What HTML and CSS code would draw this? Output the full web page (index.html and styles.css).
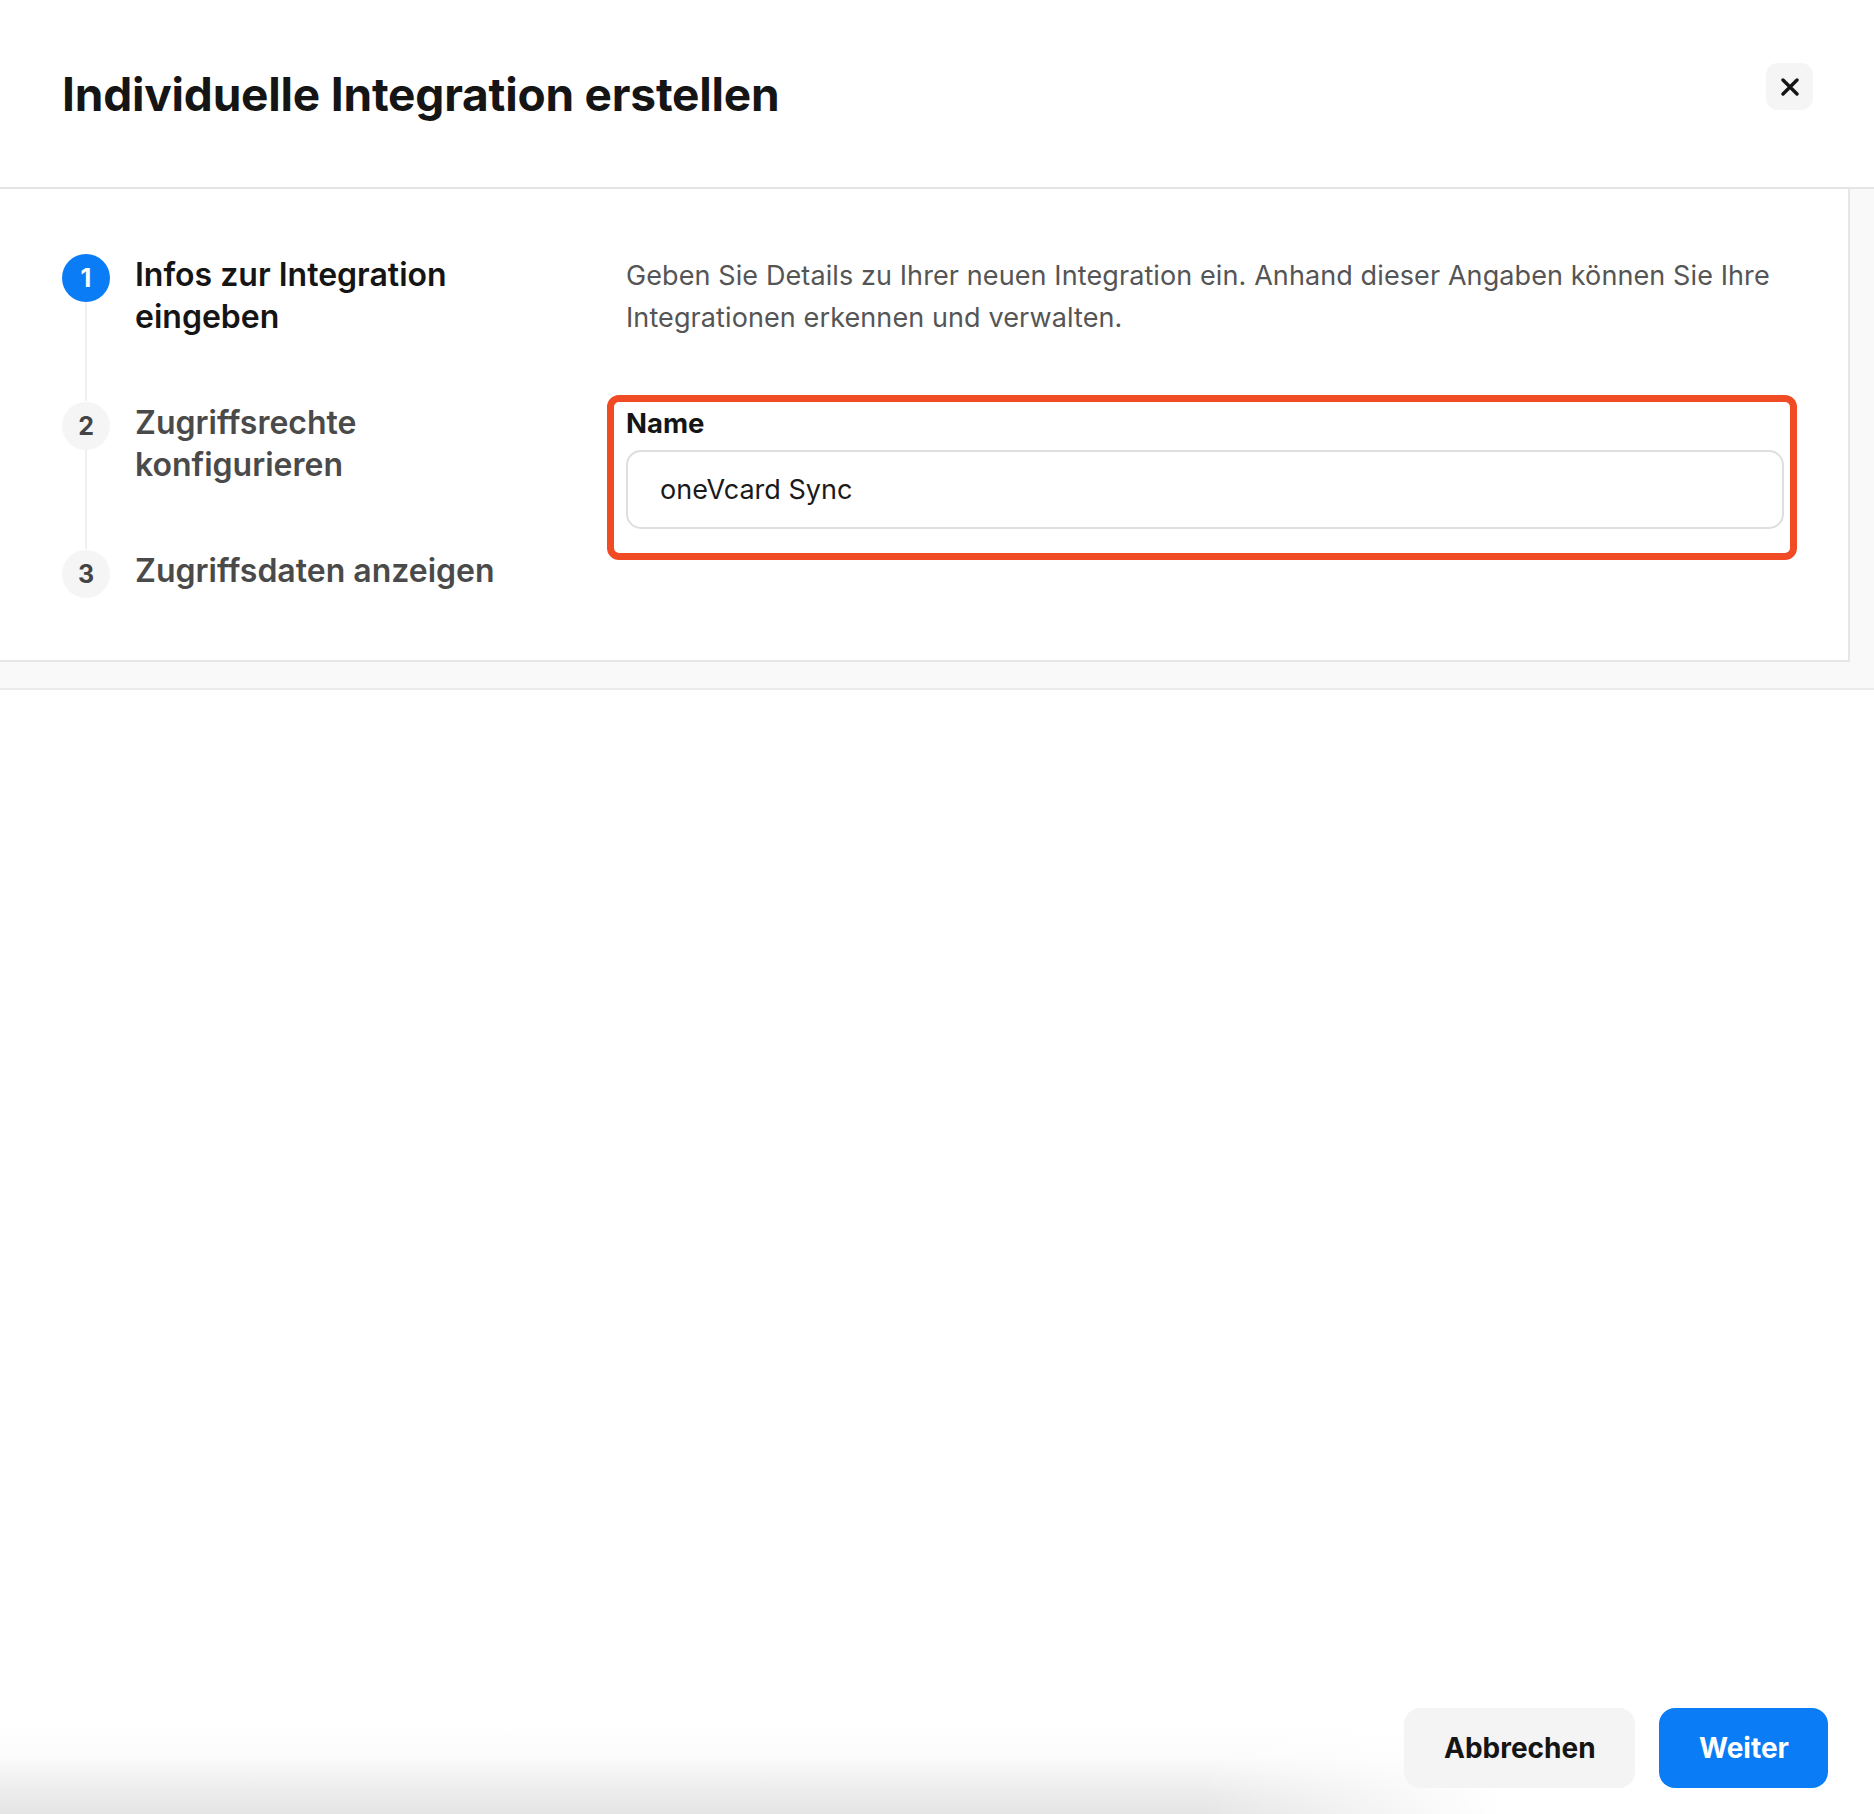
FILE: index.html
```html
<!DOCTYPE html>
<html lang="de">
<head>
<meta charset="utf-8">
<title>Individuelle Integration erstellen</title>
<link rel="stylesheet" href="styles.css">
</head>
<body>
<div class="page">
  <header class="header">
    <h1 class="title">Individuelle Integration erstellen</h1>
    <button class="close" aria-label="Schließen">
      <svg width="18" height="18" viewBox="0 0 18 18" aria-hidden="true"><path d="M2 2 L16 16 M16 2 L2 16" stroke="#161616" stroke-width="3.4" stroke-linecap="round"/></svg>
    </button>
  </header>

  <div class="stage">
    <section class="panel">
      <ol class="steps">
        <li class="step step-active">
          <div class="rail"><span class="num">1</span><span class="connector"></span></div>
          <div class="step-label">Infos zur Integration eingeben</div>
        </li>
        <li class="step">
          <div class="rail"><span class="num">2</span><span class="connector"></span></div>
          <div class="step-label">Zugriffsrechte konfigurieren</div>
        </li>
        <li class="step step-last">
          <div class="rail"><span class="num">3</span></div>
          <div class="step-label">Zugriffsdaten anzeigen</div>
        </li>
      </ol>

      <div class="form">
        <p class="intro">Geben Sie Details zu Ihrer neuen Integration ein. Anhand dieser Angaben können Sie Ihre Integrationen erkennen und verwalten.</p>
        <div class="field">
          <label class="label" for="name">Name</label>
          <div class="input" id="name">oneVcard Sync</div>
          <span class="highlight" aria-hidden="true"></span>
        </div>
      </div>
    </section>
  </div>

  <footer class="footer">
    <button class="btn btn-secondary">Abbrechen</button>
    <button class="btn btn-primary">Weiter</button>
  </footer>
</div>
</body>
</html>
```

FILE: styles.css
```css
* { box-sizing: border-box; }

html, body {
  margin: 0;
  padding: 0;
  background: #ffffff;
}

body {
  font-family: "Inter", "Liberation Sans", sans-serif;
  color: #161616;
}

.page {
  min-height: 100vh;
  display: flex;
  flex-direction: column;
}

/* Header */
.header {
  height: 189px;
  display: flex;
  justify-content: space-between;
  align-items: flex-start;
  padding: 0 61px 0 62px;
  border-bottom: 2px solid #e4e4e4;
}

.title {
  margin: 0;
  margin-top: 65px;
  font-size: 46px;
  line-height: 58px;
  font-weight: 700;
  letter-spacing: -0.2px;
  color: #151515;
}

.close {
  margin-top: 63px;
  width: 47px;
  height: 47px;
  border: none;
  border-radius: 12px;
  background: #f5f5f5;
  display: flex;
  align-items: center;
  justify-content: center;
  padding: 0;
}

/* Stage / panel */
.stage {
  background: #f9f9f9;
  border-bottom: 2px solid #ebebeb;
  padding-bottom: 26px;
}

.panel {
  width: 1850px;
  background: #ffffff;
  border-right: 2px solid #e6e6e6;
  border-bottom: 2px solid #e6e6e6;
  display: grid;
  grid-template-columns: 450px 1fr;
  column-gap: 114px;
  padding: 65px 64px 62px 62px;
}

/* Steps */
.steps {
  list-style: none;
  margin: 0;
  padding: 0;
}

.step {
  display: grid;
  grid-template-columns: 48px 1fr;
  column-gap: 25px;
  padding-bottom: 63px;
}

.step-last { padding-bottom: 0; }

.rail {
  display: flex;
  flex-direction: column;
  align-items: center;
}

.num {
  width: 48px;
  height: 48px;
  border-radius: 50%;
  background: #f5f5f5;
  color: #444444;
  font-size: 25px;
  font-weight: 700;
  line-height: 48px;
  text-align: center;
  flex: none;
}

.step + .step .num { margin-top: 1px; }

.step-active .num {
  background: #0a7cf6;
  color: #ffffff;
}

.connector {
  flex: 1;
  width: 2px;
  background: #f0f0f0;
  margin-bottom: -63px;
}

.step-label {
  font-size: 32px;
  line-height: 42px;
  font-weight: 600;
  color: #4a4a4a;
  letter-spacing: 0;
}

.step + .step .step-label { padding-top: 1px; }

.step-active .step-label { color: #151515; }

/* Form */
.form {
  padding-top: 1px;
}

.intro {
  margin: 0;
  font-size: 27px;
  line-height: 42px;
  color: #555555;
  letter-spacing: 0.1px;
}

.field {
  position: relative;
  margin-top: 68px;
}

.label {
  display: block;
  font-size: 27.5px;
  line-height: 32px;
  font-weight: 700;
  color: #151515;
  margin-bottom: 11px;
}

.input {
  height: 79px;
  border: 2px solid #dedede;
  border-radius: 15px;
  padding: 0 32px;
  display: flex;
  align-items: center;
  font-size: 27px;
  color: #1a1a1a;
}

.highlight {
  position: absolute;
  top: -12px;
  left: -19px;
  right: -13px;
  bottom: -31px;
  border: 7px solid #f14b25;
  border-radius: 12px;
  pointer-events: none;
}

/* Footer */
.footer {
  margin-top: auto;
  height: 106px;
  display: flex;
  justify-content: flex-end;
  align-items: flex-start;
  gap: 24px;
  padding: 0 46px 26px 0;
  background:
    linear-gradient(to right, rgba(255,255,255,0) 0, rgba(255,255,255,0) 1200px, #ffffff 1500px),
    linear-gradient(to bottom, #ffffff 0, #ffffff 19px, #fbfbfb 49px, #ebebeb 86px, #e5e5e5 106px);
}

.btn {
  height: 80px;
  border: none;
  border-radius: 16px;
  padding: 0 40px;
  font-family: "Inter", "Liberation Sans", sans-serif;
  font-size: 28px;
  font-weight: 700;
  cursor: pointer;
}

.btn-secondary {
  width: 231px;
  background: #f4f4f4;
  color: #151515;
}

.btn-primary {
  width: 169px;
  background: #0a7cf6;
  color: #ffffff;
}
```
